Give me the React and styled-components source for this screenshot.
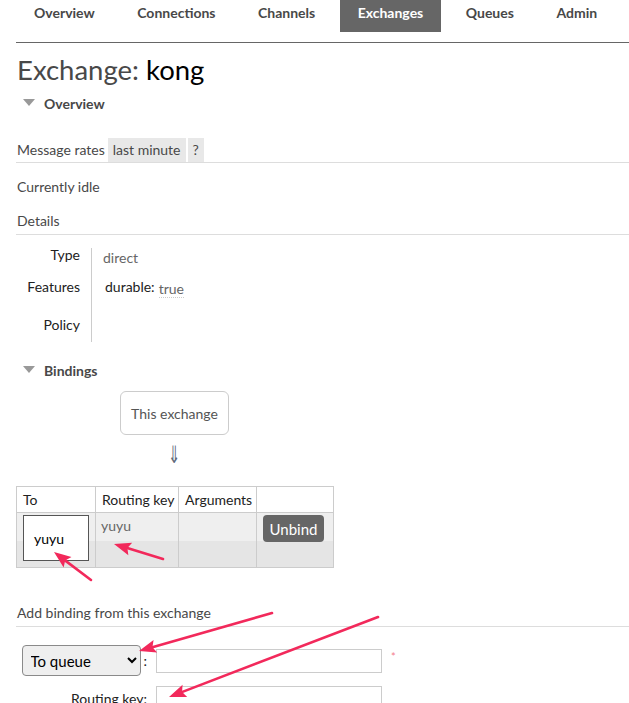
import styled, { createGlobalStyle } from "styled-components";

const GlobalStyle = createGlobalStyle`
  html, body {
    margin: 0;
    padding: 0;
    background: #fff;
  }
  body {
    font-family: Lato, "Noto Sans", "Liberation Sans", sans-serif;
    font-size: 14px;
    color: #484848;
    overflow: hidden;
  }
`;

const tabs = ["Overview", "Connections", "Channels", "Exchanges", "Queues", "Admin"];

const arrows = [
  { from: [91, 580], to: [54, 552] },
  { from: [163, 559], to: [114, 544] },
  { from: [272, 613], to: [139, 651] },
  { from: [378, 617], to: [169, 697] },
];

const Arrow = ({ from, to }) => {
  const [x1, y1] = from;
  const [x2, y2] = to;
  const len = Math.hypot(x2 - x1, y2 - y1);
  const ux = (x2 - x1) / len;
  const uy = (y2 - y1) / len;
  const head = 17;
  const wing = 6.5;
  const bx = x2 - ux * head;
  const by = y2 - uy * head;
  const pts = [
    `${x2},${y2}`,
    `${bx - uy * wing},${by + ux * wing}`,
    `${bx + ux * 3},${by + uy * 3}`,
    `${bx + uy * wing},${by - ux * wing}`,
  ].join(" ");
  return (
    <g>
      <line x1={x1} y1={y1} x2={bx + ux * 4} y2={by + uy * 4} stroke="#f2295b" strokeWidth="2.6" strokeLinecap="round" />
      <polygon points={pts} fill="#f2295b" />
    </g>
  );
};

const App = () => {
  return (
    <Page>
      <GlobalStyle />
      <TabBar>
        {tabs.map((t) => (
          <Tab key={t} $active={t === "Exchanges"}>
            {t}
          </Tab>
        ))}
      </TabBar>
      <NavRule />

      <Main>
        <Title>
          <TitleMuted>Exchange:</TitleMuted> kong
        </Title>

        <SectionHead>
          <Caret />
          Overview
        </SectionHead>

        <RateBar>
          Message rates
          <Chip>last minute</Chip>
          <Chip>?</Chip>
        </RateBar>

        <Plain>Currently idle</Plain>
        <SubHead>Details</SubHead>

        <Facts>
          <FactLabels>
            <FactLabel>Type</FactLabel>
            <FactLabel>Features</FactLabel>
            <FactLabel>Policy</FactLabel>
          </FactLabels>
          <FactValues>
            <FactValue>direct</FactValue>
            <FactValue>
              <Key>durable:</Key>
              <Dotted>true</Dotted>
            </FactValue>
          </FactValues>
        </Facts>

        <SectionHead $top={20}>
          <Caret />
          Bindings
        </SectionHead>

        <Flow>
          <ExchangeBox>This exchange</ExchangeBox>
          <DownArrow>⇓</DownArrow>
        </Flow>

        <BindTable>
          <thead>
            <tr>
              <Th $w={79}>To</Th>
              <Th $w={83}>Routing key</Th>
              <Th $w={78}>Arguments</Th>
              <Th $w={77}></Th>
            </tr>
          </thead>
          <tbody>
            <BodyRow>
              <Td>
                <QueueBox>yuyu</QueueBox>
              </Td>
              <Td>
                <KeyText>yuyu</KeyText>
              </Td>
              <Td></Td>
              <Td>
                <UnbindButton>Unbind</UnbindButton>
              </Td>
            </BodyRow>
          </tbody>
        </BindTable>

        <SubHead $top={35}>Add binding from this exchange</SubHead>

        <Form>
          <FieldLabel>
            <DestSelect defaultValue="queue">
              <option value="queue">To queue</option>
              <option value="exchange">To exchange</option>
            </DestSelect>
            <span>:</span>
          </FieldLabel>
          <FieldCell>
            <TextInput type="text" />
            <Required>*</Required>
          </FieldCell>
          <FieldLabel>Routing key:</FieldLabel>
          <FieldCell>
            <TextInput type="text" />
          </FieldCell>
        </Form>
      </Main>

      <Overlay width="629" height="703" viewBox="0 0 629 703">
        {arrows.map((a, i) => (
          <Arrow key={i} {...a} />
        ))}
      </Overlay>
    </Page>
  );
};

export default App;

const Page = styled.div`
  position: relative;
  width: 629px;
  height: 703px;
  overflow: hidden;
`;

const TabBar = styled.ul`
  display: flex;
  gap: 6.5px;
  margin: 0;
  padding: 0 0 0 16px;
  list-style: none;
`;

const Tab = styled.li`
  padding: 4px 18px 11px;
  line-height: 17px;
  font-size: 14px;
  font-weight: 700;
  color: ${(p) => (p.$active ? "#fff" : "#484848")};
  background: ${(p) => (p.$active ? "#666" : "transparent")};
`;

const NavRule = styled.div`
  margin: 10px 0 0 16px;
  border-top: 1px solid #666;
`;

const Main = styled.div`
  padding-left: 16px;
`;

const Title = styled.h1`
  margin: 9px 0 0 1px;
  font-size: 27.5px;
  font-weight: 400;
  line-height: 36px;
  color: #000;
`;

const TitleMuted = styled.span`
  color: #484848;
`;

const SectionHead = styled.h2`
  display: flex;
  align-items: center;
  gap: 9px;
  margin: ${(p) => (p.$top || 7)}px 0 0 7px;
  font-size: 14px;
  font-weight: 700;
  line-height: 18px;
  color: #484848;
`;

const Caret = styled.span`
  width: 0;
  height: 0;
  border-left: 6px solid transparent;
  border-right: 6px solid transparent;
  border-top: 7px solid #999;
  margin-top: -3px;
`;

const RateBar = styled.div`
  display: flex;
  align-items: center;
  gap: 2px;
  margin-top: 24px;
  height: 25px;
  border-bottom: 1px solid #ddd;
  padding-left: 1px;
`;

const Chip = styled.span`
  display: flex;
  align-items: center;
  height: 24px;
  padding: 0 5px;
  background: #e8e8e8;
  color: #484848;
  &:first-of-type {
    margin-left: 1px;
  }
`;

const Plain = styled.p`
  margin: 14px 0 0 1px;
  line-height: 20px;
`;

const SubHead = styled.h3`
  margin: ${(p) => (p.$top || 14)}px 0 0;
  padding: 0 0 3px 1px;
  font-size: 14px;
  font-weight: 400;
  line-height: 20px;
  color: #484848;
  border-bottom: 1px solid #ddd;
`;

const Facts = styled.div`
  display: flex;
  margin-top: 13px;
`;

const FactLabels = styled.div`
  display: flex;
  flex-direction: column;
  gap: 12px;
  width: 64px;
  padding-right: 11px;
  text-align: right;
  margin-top: -3px;
`;

const FactLabel = styled.div`
  line-height: 20px;
  color: #222;
  & + & + & {
    margin-top: 6px;
  }
`;

const FactValues = styled.div`
  display: flex;
  flex-direction: column;
  gap: 9px;
  height: 94px;
  padding-left: 11px;
  border-left: 1px solid #ccc;
`;

const FactValue = styled.div`
  display: flex;
  align-items: flex-start;
  gap: 4px;
  line-height: 20px;
  color: #666;
`;

const Key = styled.span`
  color: #222;
  padding-left: 2px;
`;

const Dotted = styled.span`
  margin-top: 4px;
  line-height: 16px;
  border-bottom: 1px dotted #ccc;
  color: #666;
`;

const Flow = styled.div`
  display: flex;
  flex-direction: column;
  align-items: center;
  width: 109px;
  margin: 11px 0 0 104px;
`;

const ExchangeBox = styled.div`
  box-sizing: border-box;
  width: 109px;
  height: 44px;
  display: flex;
  align-items: center;
  justify-content: center;
  border: 1px solid #ccc;
  border-radius: 6px;
  color: #555;
`;

const DownArrow = styled.div`
  margin-top: 6px;
  font-family: "DejaVu Sans", sans-serif;
  font-size: 24px;
  line-height: 28px;
  color: #5f6b7c;
  transform: scaleX(0.6);
`;

const BindTable = styled.table`
  margin-top: 17px;
  border-collapse: collapse;
  table-layout: fixed;
  width: 318px;
`;

const Th = styled.th`
  box-sizing: border-box;
  width: ${(p) => p.$w}px;
  height: 26px;
  padding: 0 6px;
  border: 1px solid #ccc;
  text-align: left;
  font-weight: 400;
  color: #222;
  white-space: nowrap;
`;

const BodyRow = styled.tr`
  background: linear-gradient(#efefef 0, #efefef 28px, #e5e5e5 28px);
`;

const Td = styled.td`
  height: 50px;
  padding: 2px 6px;
  border: 1px solid #ccc;
  vertical-align: top;
`;

const QueueBox = styled.div`
  box-sizing: border-box;
  width: 66px;
  height: 46px;
  padding: 13px 0 0 10px;
  background: #fff;
  border: 1px solid #555;
  color: #000;
  line-height: 20px;
`;

const KeyText = styled.div`
  margin: 1px 0 0 -1px;
  color: #666;
  line-height: 20px;
`;

const UnbindButton = styled.button`
  width: 61px;
  height: 27px;
  border: 0;
  border-radius: 4px;
  background: #666;
  color: #fff;
  font-family: inherit;
  font-size: 15px;
`;

const Form = styled.div`
  display: grid;
  grid-template-columns: 140px auto;
  row-gap: 10px;
  align-items: center;
  margin-top: 18px;
`;

const FieldLabel = styled.div`
  display: flex;
  align-items: center;
  justify-content: flex-end;
  gap: 3px;
  padding-right: 9px;
  margin-left: -10px;
  color: #222;
`;

const DestSelect = styled.select`
  box-sizing: border-box;
  width: 119px;
  height: 31px;
  padding: 0 4px;
  font-family: inherit;
  font-size: 15px;
  color: #000;
  background-color: #efefef;
  border: 1px solid #8a8a8a;
  border-radius: 4px;
`;

const FieldCell = styled.div`
  display: flex;
  align-items: flex-start;
  gap: 9px;
`;

const TextInput = styled.input`
  box-sizing: border-box;
  width: 226px;
  height: 24px;
  border: 1px solid #ccc;
  padding: 0 4px;
`;

const Required = styled.span`
  color: #f47a8a;
  font-size: 11px;
  line-height: 12px;
  margin-top: 2px;
`;

const Overlay = styled.svg`
  position: absolute;
  left: 0;
  top: 0;
  pointer-events: none;
`;
